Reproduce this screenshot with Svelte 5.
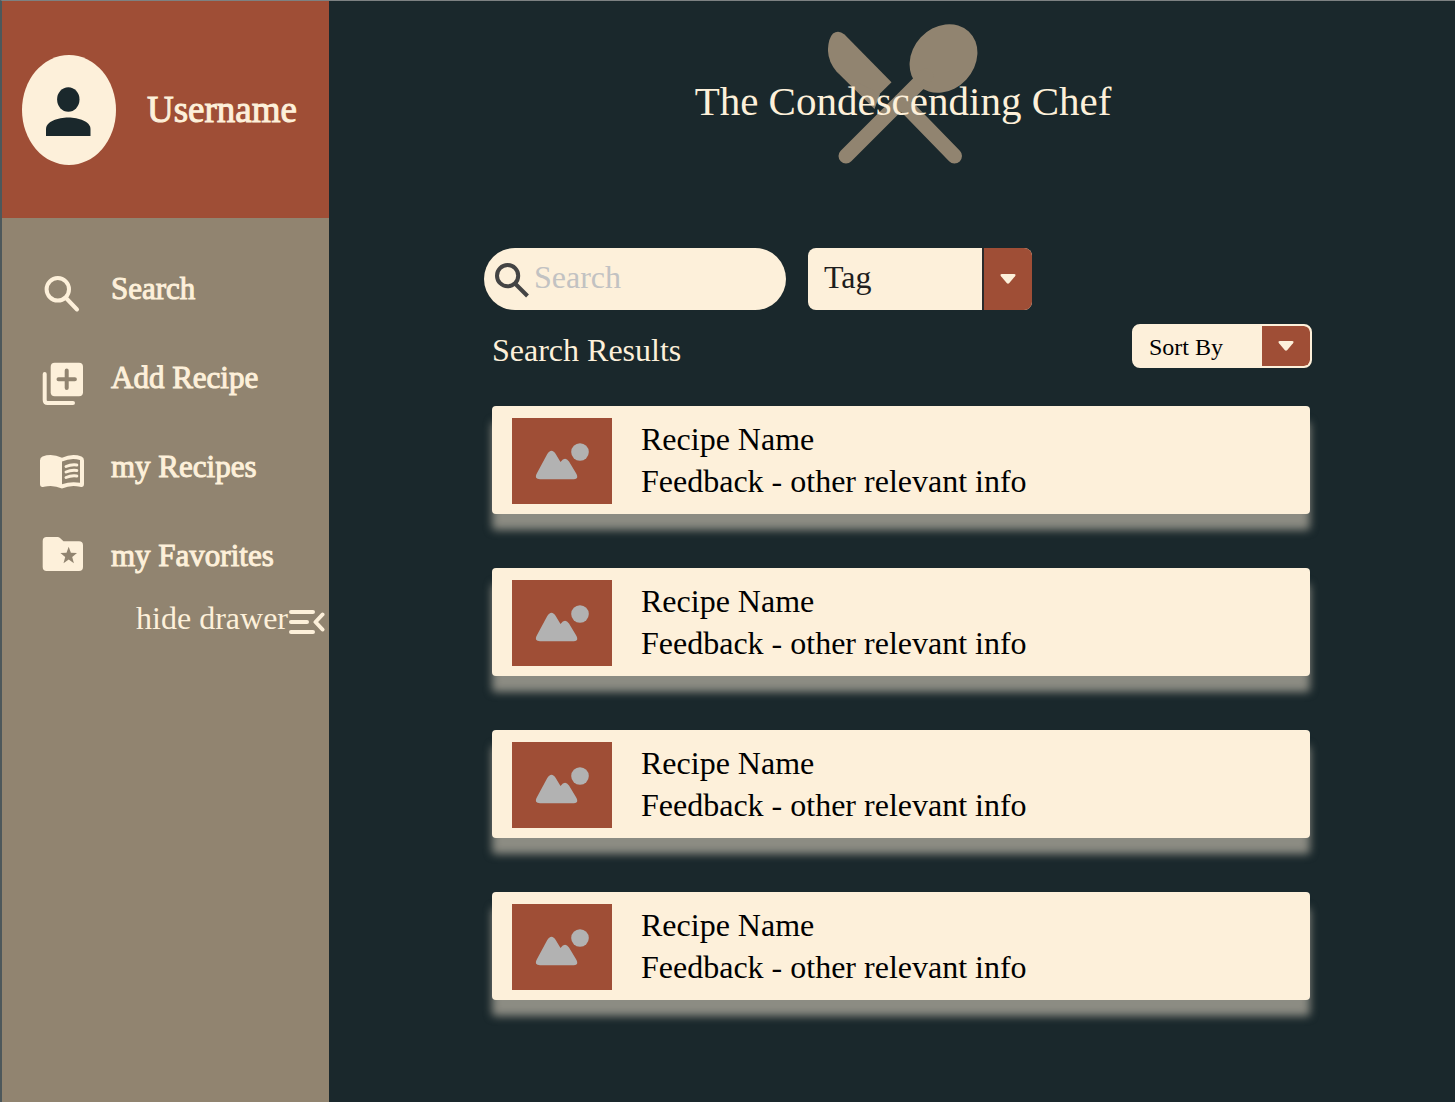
<script>
  const recipes = [1, 2, 3, 4].map((id) => ({
    id,
    name: 'Recipe Name',
    info: 'Feedback - other relevant info',
  }));
  let query = $state('');
</script>

{#snippet arrow()}
  <svg width="16" height="10" viewBox="0 0 16 10" aria-hidden="true">
    <path d="M2 0H14Q16.500 .3 15 2.300L9.300 9Q8 10.300 6.700 9L1 2.300Q-.5 .3 2 0Z" />
  </svg>
{/snippet}

<div class="app">
  <aside>
    <div class="profile">
      <svg width="94" height="110" viewBox="0 0 94 110" aria-hidden="true">
        <ellipse class="cream" cx="47" cy="55" rx="47" ry="55" />
        <ellipse class="ink" cx="46.300" cy="44.500" rx="11.200" ry="12.200" />
        <path class="ink" d="M24 81V74C24 66.500 36 62.500 46.300 62.500S68.500 66.500 68.500 74V81Z" />
      </svg>
      <span>Username</span>
    </div>

    <nav>
      <a href="#search">
        <svg width="44" height="55" viewBox="0 0 44 55" aria-hidden="true">
          <circle class="line" cx="17.800" cy="28.300" r="11.200" />
          <path class="line" d="M26.500 37.500L37 48.500" />
        </svg>
        Search
      </a>
      <a href="#add">
        <svg width="44" height="55" viewBox="0 0 44 55" aria-hidden="true">
          <rect class="cream" x="10.700" y="12.700" width="32.300" height="33.600" rx="4" />
          <path class="line taupe" d="M18.500 29.300H34.900M26.700 20.500V38" />
          <path class="line" d="M4.700 24V50Q4.700 53 7.700 53H33" />
        </svg>
        Add Recipe
      </a>
      <a href="#recipes">
        <svg width="44" height="55" viewBox="0 0 44 55" aria-hidden="true">
          <path class="cream" fill-rule="evenodd" d="M0 21.500Q0 18.500 2.500 17.500Q12 14.200 22 18.800Q32 14.200 41.500 17.500Q44 18.500 44 21.500V45Q44 48.800 40 47.800Q31 45.500 22 49.500Q13 45.500 4 47.800Q0 48.800 0 45ZM22 22.600V45.300Q30.500 42.200 40 43.800V21Q31 18.400 22 22.600Z" />
          <path class="line thin" d="M26 27.500Q31 25.300 36.800 26M26 33Q31 30.800 36.800 31.500M26 38.500Q31 36.300 36.800 37" />
        </svg>
        my Recipes
      </a>
      <a href="#favorites">
        <svg width="44" height="55" viewBox="0 0 44 55" aria-hidden="true">
          <path class="cream" d="M6.700 9H17.500Q19 9 20 10L23.500 13.300H39Q43 13.300 43 17.300V39Q43 43 39 43H6.700Q2.700 43 2.700 39V13Q2.700 9 6.700 9Z" />
          <path class="taupe-fill" d="M28.700 18.800L30.900 24.700L37 25L32.200 29L33.900 35.200L28.700 31.600L23.500 35.200L25.200 29L20.400 25L26.500 24.700Z" />
        </svg>
        my Favorites
      </a>
    </nav>
    <button class="hide" type="button">
      hide drawer
      <svg width="36" height="36" viewBox="0 0 36 36" aria-hidden="true">
        <path class="line" d="M2 12H24M2 22H18M2 32H24M33.500 14.500L26.500 22L33.500 29.500" />
      </svg>
    </button>
  </aside>

  <main>
    <header>
      <svg width="150" height="140" viewBox="0 0 150 140" aria-hidden="true">
        <path class="taupe-fill" d="M16.500 10.500L63.500 58.300L46.500 75L8.500 47.500Q-.5 37 0 24.500Q.7 14 5 9.500Q10.500 5.500 16.500 10.500Z" />
        <path class="taupe-fill" d="M8.500 47.500L46.500 85L52 70Z" />
        <ellipse class="taupe-fill" cx="115.500" cy="34.500" rx="37" ry="31" transform="rotate(-47 115.500 34.500)" />
        <path class="handle" d="M18 132L98 52M73 77L126.500 132" />
      </svg>
      <h1>The Condescending Chef</h1>
    </header>

    <form class="filters" onsubmit={(e) => e.preventDefault()}>
      <label class="search">
        <svg width="50" height="62" viewBox="0 0 50 62" aria-hidden="true">
          <circle class="lens" cx="23.600" cy="27.700" r="10.600" />
          <path class="lens" d="M31.500 36L43.500 48" />
        </svg>
        <input type="search" placeholder="Search" aria-label="Search recipes" bind:value={query} />
      </label>
      <div class="picker tag">
        <select aria-label="Tag"><option>Tag</option></select>
        <span class="cell">{@render arrow()}</span>
      </div>
    </form>

    <section>
      <div class="bar">
        <h2>Search Results</h2>
        <div class="picker sort">
          <select aria-label="Sort By"><option>Sort By</option></select>
          <span class="cell">{@render arrow()}</span>
        </div>
      </div>
      <ul>
        {#each recipes as recipe (recipe.id)}
          <li>
            <div class="thumb">
              <svg width="100" height="86" viewBox="0 0 100 86" aria-hidden="true">
                <circle cx="68" cy="34" r="8.800" />
                <path d="M24.500 56L35 36.500Q39.500 29 44 36.500L48.500 44Q53 38 57 43.500L64.500 56Q67 61 62 61.300H28Q22 61 24.500 56Z" />
              </svg>
            </div>
            <div class="info">
              <h3>{recipe.name}</h3>
              <p>{recipe.info}</p>
            </div>
          </li>
        {/each}
      </ul>
    </section>
  </main>
</div>

<style>
  :global(body) {
    background: #1a282c;
  }
  .app {
    --cream: #fdf0da;
    --rust: #9f4e36;
    --taupe: #918470;
    --ink: #1a282c;
    box-sizing: border-box;
    display: flex;
    min-height: 100vh;
    border-top: 1px solid #7d8182;
    border-left: 2px solid #4d585b;
    background: var(--ink);
    color: var(--cream);
    font-family: 'Liberation Serif', 'Times New Roman', serif;
    font-size: 32px;
    line-height: 36px;
  }
  .app :global(*) {
    box-sizing: border-box;
  }
  svg {
    display: block;
    flex: none;
  }
  .cream { fill: var(--cream); }
  .ink { fill: var(--ink); }
  .taupe-fill { fill: var(--taupe); }
  .line {
    fill: none;
    stroke: var(--cream);
    stroke-width: 4;
    stroke-linecap: round;
    stroke-linejoin: round;
  }
  .line.taupe { stroke: var(--taupe); }
  .line.thin { stroke-width: 3; }
  .handle {
    fill: none;
    stroke: var(--taupe);
    stroke-width: 15;
    stroke-linecap: round;
  }

  aside {
    flex: none;
    width: 327px;
    background: var(--taupe);
  }
  .profile {
    display: flex;
    align-items: center;
    gap: 31px;
    height: 217px;
    padding-left: 20px;
    background: var(--rust);
    font-size: 37px;
    -webkit-text-stroke: 1px var(--cream);
  }
  nav {
    padding: 26px 0 0 38px;
  }
  nav a {
    display: flex;
    align-items: center;
    gap: 27px;
    height: 89px;
    color: inherit;
    font-size: 31px;
    text-decoration: none;
    -webkit-text-stroke: 1px var(--cream);
  }
  .hide {
    display: flex;
    align-items: center;
    gap: 1px;
    margin: 0 0 0 auto;
    padding: 0 4px 0 0;
    border: 0;
    background: none;
    color: inherit;
    font: inherit;
  }

  main {
    flex: 1;
    min-width: 0;
    padding: 23px 143px 48px 155px;
  }
  header {
    display: grid;
    place-items: center;
    padding-left: 10px;
  }
  header > :global(*) {
    grid-area: 1 / 1;
  }
  h1, h2, h3, p, ul {
    margin: 0;
    padding: 0;
    font-size: inherit;
    font-weight: 400;
  }
  h1 {
    padding-top: 14px;
    font-size: 41px;
    line-height: 46px;
  }
  .filters {
    display: flex;
    gap: 22px;
    margin-top: 84px;
  }
  .search {
    display: flex;
    width: 302px;
    height: 62px;
    border-radius: 31px;
    background: var(--cream);
  }
  .lens {
    fill: none;
    stroke: #444;
    stroke-width: 4;
  }
  input {
    flex: 1;
    min-width: 0;
    padding: 0 24px 4px 0;
    border: 0;
    outline: 0;
    background: none;
    color: #1e1e1e;
    font: inherit;
    appearance: none;
  }
  input::placeholder {
    color: #c2c2c2;
    opacity: 1;
  }
  .picker {
    display: grid;
    overflow: hidden;
    border-radius: 8px;
    background: var(--cream);
  }
  .picker > :global(*) {
    grid-area: 1 / 1;
  }
  select {
    width: 100%;
    border: 0;
    background: none;
    color: #1e1e1e;
    font: inherit;
    appearance: none;
  }
  .cell {
    display: grid;
    place-items: center;
    justify-self: end;
    width: 50px;
    background: var(--rust);
    fill: var(--cream);
    pointer-events: none;
  }
  .tag {
    width: 224px;
    height: 62px;
  }
  .tag select {
    padding: 0 60px 4px 16px;
  }
  .tag .cell {
    border-left: 2px solid #2b2b2b;
  }
  .sort {
    width: 180px;
    height: 44px;
    border: 2px solid var(--cream);
    font-size: 24px;
  }
  .sort select {
    padding: 2px 50px 0 15px;
    color: #000;
  }
  .sort .cell {
    width: 48px;
    border-radius: 0 6px 6px 0;
  }

  section {
    margin-top: 14px;
    padding-left: 8px;
  }
  .bar {
    display: flex;
    justify-content: space-between;
  }
  h2 {
    padding-top: 8px;
  }
  ul {
    display: grid;
    gap: 54px;
    margin: 38px 2px 0 0;
    list-style: none;
  }
  li {
    display: flex;
    align-items: center;
    gap: 29px;
    padding: 12px 20px 10px;
    border-radius: 4px;
    background: var(--cream);
    box-shadow: 0 16px 8px rgba(253, 240, 218, 0.5);
    color: #000;
  }
  .thumb {
    background: var(--rust);
    fill: #b2b2b2;
  }
  .info {
    padding-bottom: 2px;
    line-height: 42px;
  }
</style>
